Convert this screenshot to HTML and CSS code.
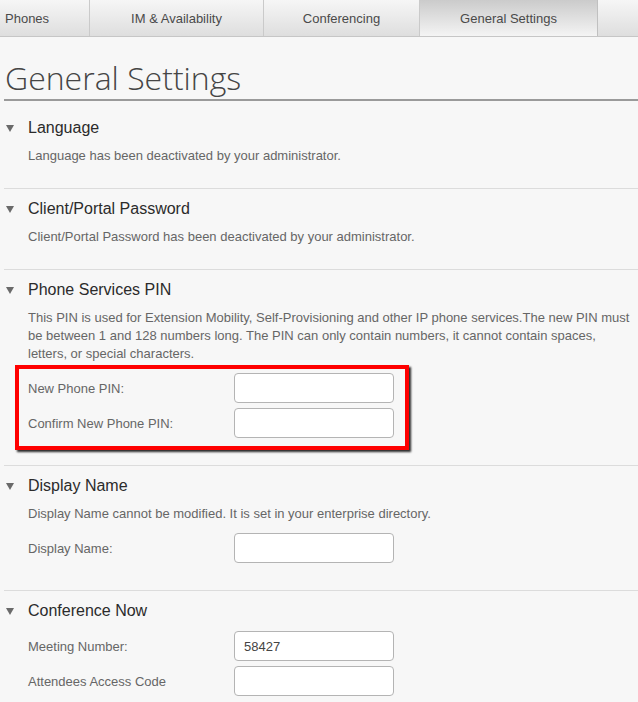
FILE: index.html
```html
<!DOCTYPE html>
<html>
<head>
<meta charset="utf-8">
<title>General Settings</title>
<link rel="stylesheet" href="styles.css">
</head>
<body>
<nav class="tabs">
  <div class="tab tab-first">Phones</div>
  <div class="tab tab-im">IM &amp; Availability</div>
  <div class="tab tab-conf">Conferencing</div>
  <div class="tab tab-gen active">General Settings</div>
  <div class="tab-fill"></div>
</nav>
<main class="page">
  <h1 class="title">General Settings</h1>

  <section class="section first">
    <h2 class="sec-head"><span class="caret"></span>Language</h2>
    <p class="desc">Language has been deactivated by your administrator.</p>
  </section>

  <section class="section">
    <h2 class="sec-head"><span class="caret"></span>Client/Portal Password</h2>
    <p class="desc">Client/Portal Password has been deactivated by your administrator.</p>
  </section>

  <section class="section pin">
    <h2 class="sec-head"><span class="caret"></span>Phone Services PIN</h2>
    <p class="desc">This PIN is used for Extension Mobility, Self-Provisioning and other IP phone services.The new PIN must be between 1 and 128 numbers long. The PIN can only contain numbers, it cannot contain spaces, letters, or special characters.</p>
    <div class="highlight">
      <div class="row"><label class="label">New Phone PIN:</label><input class="field" type="password"></div>
      <div class="row"><label class="label">Confirm New Phone PIN:</label><input class="field" type="password"></div>
    </div>
  </section>

  <section class="section form">
    <h2 class="sec-head"><span class="caret"></span>Display Name</h2>
    <p class="desc">Display Name cannot be modified. It is set in your enterprise directory.</p>
    <div class="rows">
      <div class="row"><label class="label">Display Name:</label><input class="field" type="text"></div>
    </div>
  </section>

  <section class="section form">
    <h2 class="sec-head"><span class="caret"></span>Conference Now</h2>
    <div class="rows">
      <div class="row"><label class="label">Meeting Number:</label><input class="field" type="text" value="58427"></div>
      <div class="row"><label class="label">Attendees Access Code</label><input class="field" type="text"></div>
    </div>
  </section>
</main>
</body>
</html>
```
FILE: styles.css
```css
html, body {
  margin: 0;
  padding: 0;
  background: #f7f7f7;
  font-family: "Liberation Sans", Arial, sans-serif;
  color: #333;
  overflow: hidden;
}

.tabs {
  display: flex;
  height: 36px;
  border-bottom: 1px solid #c6c6c6;
}
.tab {
  flex: 0 0 auto;
  box-sizing: border-box;
  height: 36px;
  display: flex;
  align-items: center;
  justify-content: center;
  font-size: 13px;
  color: #4a4a4a;
  background: linear-gradient(#f6f6f6, #dedede);
  border-right: 1px solid #cacaca;
}
.tab-first { width: 90px; justify-content: flex-start; padding-left: 5px; }
.tab-im { width: 174px; }
.tab-conf { width: 156px; }
.tab-gen { width: 178px; }
.tab.active {
  background: linear-gradient(#cbcbcb, #f4f4f4);
  border-right: 1px solid #c0c0c0;
}
.tab-fill {
  flex: 1;
  background: linear-gradient(#f6f6f6, #dedede);
}

.page {
  margin-left: 4px;
}
.title {
  margin: 0;
  padding: 20px 0 0 1px;
  height: 42px;
  font-family: "Open Sans", sans-serif;
  font-weight: 300;
  font-size: 32px;
  line-height: 42px;
  color: #454545;
  border-bottom: 2px solid #9a9a9a;
}

.section {
  border-top: 1px solid #dcdcdc;
  padding: 10px 8px 23px 0;
}
.section.first {
  border-top: 0;
  padding-top: 17px;
}
.sec-head {
  display: flex;
  align-items: center;
  margin: 0;
  height: 20px;
  font-size: 16px;
  font-weight: normal;
  color: #2b2b2b;
}
.caret {
  width: 0;
  height: 0;
  margin: 1px 14px 0 2px;
  border-left: 4px solid transparent;
  border-right: 4px solid transparent;
  border-top: 7px solid #6a6a6a;
}
.desc {
  margin: 9px 0 0 24px;
  font-size: 13px;
  line-height: 18px;
  color: #666;
}

.section.pin {
  padding-bottom: 15px;
}
.highlight {
  margin: 2px 0 0 11px;
  width: 394px;
  box-sizing: border-box;
  border: 4px solid #ff0000;
  box-shadow: 2px 2px 2px #2a2a2a;
  padding: 4px 0 8px 9px;
  display: flex;
  flex-direction: column;
  gap: 5px;
}
.section.form {
  padding-bottom: 27px;
}
.rows {
  margin: 10px 0 0 24px;
  display: flex;
  flex-direction: column;
  gap: 5px;
}
.row {
  display: flex;
  align-items: center;
  height: 30px;
}
.label {
  width: 206px;
  flex: 0 0 206px;
  font-size: 13px;
  color: #666;
}
.field {
  box-sizing: border-box;
  width: 160px;
  height: 30px;
  margin: 0;
  padding: 0 9px;
  border: 1px solid #b4b4b4;
  border-radius: 4px;
  background: #fff;
  font-family: "Liberation Sans", Arial, sans-serif;
  font-size: 13px;
  color: #444;
  outline: none;
}
```
